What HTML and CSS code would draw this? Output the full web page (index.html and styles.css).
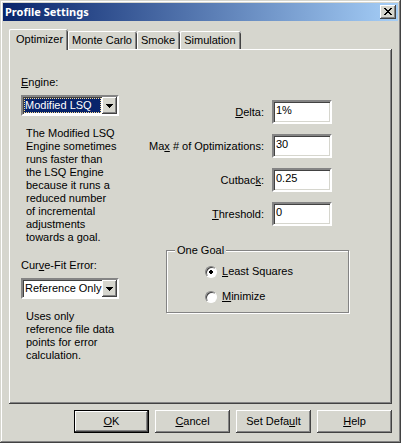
FILE: index.html
```html
<!DOCTYPE html>
<html lang="en">
<head>
<meta charset="utf-8">
<title>Profile Settings</title>
<link rel="stylesheet" href="styles.css">
</head>
<body>
<form class="dialog">
  <header class="titlebar">
    <h1 class="title">Profile Settings</h1>
    <button type="button" class="close" aria-label="Close">
      <svg width="8" height="7" viewBox="0 0 8 7" shape-rendering="crispEdges" aria-hidden="true"><path d="M0 0h2v1h1v1h2v-1h1v-1h2v1h-1v1h-1v1h-1v1h1v1h1v1h1v1h-2v-1h-1v-1h-2v1h-1v1h-2v-1h1v-1h1v-1h1v-1h-1v-1h-1v-1h-1z"/></svg>
    </button>
  </header>
  <div class="tabs" role="tablist">
    <button type="button" class="tab active" role="tab" aria-selected="true">Optimizer</button>
    <button type="button" class="tab" role="tab">Monte Carlo</button>
    <button type="button" class="tab" role="tab">Smoke</button>
    <button type="button" class="tab" role="tab">Simulation</button>
  </div>
  <main class="panel">
    <section class="choices">
      <label for="engine"><u>E</u>ngine:</label>
      <div class="combo focused">
        <select id="engine"><option>Modified LSQ</option></select>
        <span class="drop"><svg width="7" height="4" viewBox="0 0 7 4" shape-rendering="crispEdges" aria-hidden="true"><path d="M0 0h7v1h-1v1h-1v1h-1v1h-1v-1h-1v-1h-1v-1h-1z"/></svg></span>
      </div>
      <p class="note">The Modified LSQ<br>Engine sometimes<br>runs faster than<br>the LSQ Engine<br>because it runs a<br>reduced number<br>of incremental<br>adjustments<br>towards a goal.</p>
      <label for="fit">Cur<u>v</u>e-Fit Error:</label>
      <div class="combo">
        <select id="fit"><option>Reference Only</option></select>
        <span class="drop"><svg width="7" height="4" viewBox="0 0 7 4" shape-rendering="crispEdges" aria-hidden="true"><path d="M0 0h7v1h-1v1h-1v1h-1v1h-1v-1h-1v-1h-1v-1h-1z"/></svg></span>
      </div>
      <p class="note">Uses only<br>reference file data<br>points for error<br>calculation.</p>
    </section>
    <section class="settings">
      <div class="fields">
        <label for="delta"><u>D</u>elta:</label><input id="delta" type="text" value="1%">
        <label for="max">Ma<u>x</u> # of Optimizations:</label><input id="max" type="text" value="30">
        <label for="cutback">Cutbac<u>k</u>:</label><input id="cutback" type="text" value="0.25">
        <label for="threshold"><u>T</u>hreshold:</label><input id="threshold" type="text" value="0">
      </div>
      <fieldset class="goal">
        <legend>One Goal</legend>
        <label class="option"><input type="radio" name="goal" checked><span><u>L</u>east Squares</span></label>
        <label class="option"><input type="radio" name="goal"><span><u>M</u>inimize</span></label>
      </fieldset>
    </section>
  </main>
  <footer class="actions">
    <button type="button" class="button default"><span><u>O</u>K</span></button>
    <button type="button" class="button"><span><u>C</u>ancel</span></button>
    <button type="button" class="button"><span>Set Defa<u>u</u>lt</span></button>
    <button type="button" class="button"><span><u>H</u>elp</span></button>
  </footer>
</form>
</body>
</html>
```
FILE: styles.css
```css
:root {
  --face: #d6d6ce;
  --light: #ffffff;
  --shade: #848484;
  --dark: #424242;
  --navy: #08246b;
}

* {
  box-sizing: border-box;
}

body {
  margin: 0;
}

body,
button,
input,
select {
  font: 11px/13px "Liberation Sans", Arial, sans-serif;
  color: #000;
}

u {
  text-underline-offset: 1px;
  text-decoration-thickness: 1px;
  text-decoration-skip-ink: none;
}

.dialog {
  display: flex;
  flex-direction: column;
  min-height: 100vh;
  padding: 3px 3px 10px;
  background: var(--face);
  box-shadow: inset -1px -1px var(--dark), inset 1px 1px var(--face), inset -2px -2px var(--shade), inset 2px 2px var(--light);
}

.titlebar {
  display: flex;
  align-items: center;
  justify-content: space-between;
  height: 18px;
  padding: 0 2px;
  background: linear-gradient(to right, #08246b, #a5cef7);
}

.title {
  margin: 0;
  color: #fff;
  font: bold 11px/18px "Noto Sans", Tahoma, sans-serif;
}

.close {
  display: flex;
  align-items: center;
  justify-content: center;
  width: 16px;
  height: 14px;
  padding: 0 1px 1px 0;
  border: 0;
  background: var(--face);
  box-shadow: inset -1px -1px var(--dark), inset 1px 1px var(--light), inset -2px -2px var(--shade);
}

.tabs {
  display: flex;
  align-items: flex-end;
  margin: 8px 6px 0;
}

.tab {
  height: 18px;
  padding: 0 5px 0 4px;
  border: 0;
  border-radius: 2px 2px 0 0;
  background: var(--face);
  box-shadow: inset 0 1px var(--light), inset 1px 0 var(--light), inset -1px 0 var(--dark), inset -2px 0 var(--shade);
}

.tab.active {
  z-index: 1;
  height: 21px;
  margin-bottom: -1px;
  padding: 0 5px 1px 7px;
}

.panel {
  display: flex;
  flex: 1;
  justify-content: space-between;
  margin: 0 6px;
  padding: 27px 43px 0 12px;
  box-shadow: inset -1px -1px var(--dark), inset 1px 1px var(--light), inset -2px -2px var(--shade);
}

.choices {
  display: flex;
  flex-direction: column;
  width: 98px;
}

.combo {
  position: relative;
  margin-top: 6px;
}

.combo select {
  display: block;
  width: 100%;
  height: 21px;
  padding: 0 15px 0 2px;
  appearance: none;
  border: 2px solid;
  border-color: var(--shade) var(--light) var(--light) var(--shade);
  border-radius: 0;
  outline: 0;
  background: #fff;
  box-shadow: inset 1px 1px var(--dark);
}

.combo.focused select {
  color: #fff;
  background: linear-gradient(var(--navy), var(--navy)) 1px 1px / 77px 15px no-repeat #fff;
}

.combo.focused::after {
  content: "";
  position: absolute;
  inset: 3px 18px 3px 3px;
  border: 1px dotted #f7db94;
  pointer-events: none;
}

.drop {
  position: absolute;
  top: 2px;
  right: 2px;
  bottom: 2px;
  display: flex;
  align-items: center;
  justify-content: center;
  width: 15px;
  background: var(--face);
  box-shadow: inset -1px -1px var(--dark), inset 1px 1px var(--light), inset -2px -2px var(--shade);
  pointer-events: none;
}

.note {
  margin: 11px 0 15px 5px;
  white-space: nowrap;
}

.settings {
  display: flex;
  flex-direction: column;
  padding-top: 24px;
  width: 202px;
}

.fields {
  display: grid;
  grid-template-columns: 1fr 60px;
  align-items: center;
  gap: 10px 8px;
  margin-right: 17px;
  text-align: right;
  white-space: nowrap;
}

.fields input {
  width: 100%;
  height: 24px;
  padding: 0 2px 4px;
  border: 2px solid;
  border-color: var(--shade) var(--light) var(--light) var(--shade);
  outline: 0;
  background: #fff;
  box-shadow: inset 1px 1px var(--dark), inset -1px -1px var(--face);
}

.goal {
  margin: 18px 0 0 19px;
  padding: 8px 0 9px 38px;
  border: 1px solid var(--shade);
  box-shadow: 1px 1px var(--light), inset 1px 1px var(--light);
}

.goal legend {
  margin-left: -30px;
  padding: 0 2px;
  background: var(--face);
}

.option {
  display: flex;
  align-items: center;
  gap: 5px;
}

.option + .option {
  margin-top: 12px;
}

.option input {
  width: 12px;
  height: 12px;
  margin: 0;
  appearance: none;
  border: 1px solid;
  border-color: var(--shade) var(--light) var(--light) var(--shade);
  border-radius: 50%;
  background: #fff;
  box-shadow: inset 1px 1px var(--dark);
}

.option input:checked {
  background: radial-gradient(circle, #000 2px, #fff 2px);
}

.actions {
  display: flex;
  justify-content: flex-end;
  gap: 6px;
  margin: 6px 6px 0;
}

.button {
  width: 75px;
  height: 23px;
  padding: 0;
  border: 0;
  background: var(--face);
  box-shadow: inset -1px -1px var(--dark), inset 1px 1px var(--light), inset -2px -2px var(--shade);
}

.button.default {
  border: 1px solid #000;
}
```
